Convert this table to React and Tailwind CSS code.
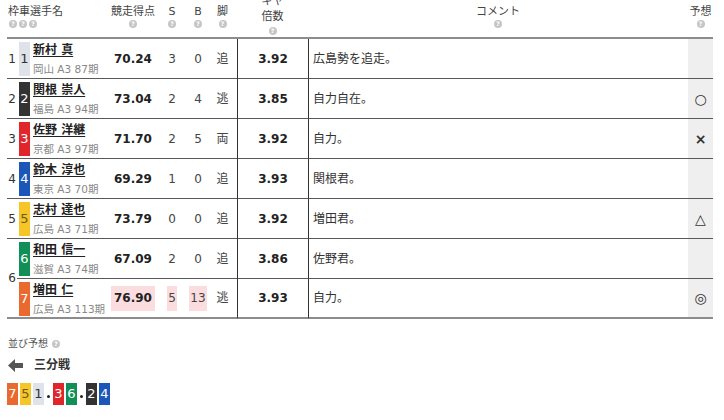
import React from 'react';

const rows = [
  { waku: 1, car: 1, name: '新村 真', info: '岡山 A3 87期', score: '70.24', s: 3, b: 0, kyaku: '追', gear: '3.92', comment: '広島勢を追走。', mark: '' },
  { waku: 2, car: 2, name: '関根 崇人', info: '福島 A3 94期', score: '73.04', s: 2, b: 4, kyaku: '逃', gear: '3.85', comment: '自力自在。', mark: '○' },
  { waku: 3, car: 3, name: '佐野 洋継', info: '京都 A3 97期', score: '71.70', s: 2, b: 5, kyaku: '両', gear: '3.92', comment: '自力。', mark: '×' },
  { waku: 4, car: 4, name: '鈴木 淳也', info: '東京 A3 70期', score: '69.29', s: 1, b: 0, kyaku: '追', gear: '3.93', comment: '関根君。', mark: '' },
  { waku: 5, car: 5, name: '志村 達也', info: '広島 A3 71期', score: '73.79', s: 0, b: 0, kyaku: '追', gear: '3.92', comment: '増田君。', mark: '△' },
  { waku: 6, car: 6, name: '和田 信一', info: '滋賀 A3 74期', score: '67.09', s: 2, b: 0, kyaku: '追', gear: '3.86', comment: '佐野君。', mark: '' },
  { waku: null, car: 7, name: '増田 仁', info: '広島 A3 113期', score: '76.90', s: 5, b: 13, kyaku: '逃', gear: '3.93', comment: '自力。', mark: '◎', top: true },
];

const carColors = {
  1: 'bg-[#dfe3e9] text-[#333]',
  2: 'bg-[#333333] text-white',
  3: 'bg-[#e0262b] text-white',
  4: 'bg-[#1b57b9] text-white',
  5: 'bg-[#f6c527] text-[#6b5a20]',
  6: 'bg-[#108f57] text-white',
  7: 'bg-[#e9692f] text-white',
};

const font = "font-['DejaVu_Sans','Noto_Sans_CJK_JP',sans-serif]";

const Q = () => (
  <span className="flex h-[8px] w-[8px] items-center justify-center rounded-full bg-[#c6c6c6] text-[6px] font-bold leading-none text-white">?</span>
);

const HeadCell = ({ label, className = '' }) => (
  <div className={`flex h-[39px] flex-col items-center border-b-2 border-[#8c8c8c] pt-[5px] ${className}`}>
    <span className="text-[11px] leading-[14px] text-[#444]">{label}</span>
    <span className="mt-[1px]"><Q /></span>
  </div>
);

const Hi = ({ on, children, className = '' }) => (
  <span className={`flex h-[25px] items-center ${on ? 'bg-[#fbdde0]' : ''} ${className}`}>{children}</span>
);

const LineBox = ({ n }) => (
  <span className={`flex h-[22px] w-[11px] items-center justify-center text-[13px] ${carColors[n]}`}>{n}</span>
);

export default function App() {
  return (
    <div className={`min-h-[420px] bg-white pl-[7px] text-[#333] ${font}`}>
      <div className="grid w-[706px] grid-cols-[10px_15px_78px_46px_32px_20px_29px_71px_380px_25px]">
        {/* header */}
        <div className="col-span-3 flex h-[39px] flex-col border-b-2 border-[#8c8c8c] pl-[1px] pt-[5px]">
          <span className="text-[11px] leading-[14px] text-[#444]">枠車選手名</span>
          <span className="mt-[1px] flex gap-[2px] pl-[1px]"><Q /><Q /><Q /></span>
        </div>
        <HeadCell label="競走得点" />
        <HeadCell label="S" />
        <HeadCell label="B" />
        <HeadCell label="脚" />
        <div className="flex h-[39px] flex-col items-center border-b-2 border-[#8c8c8c]">
          <div className="-mt-[6px] flex flex-col items-center text-[11px] leading-[15px] text-[#444]">
            <span>ギヤ</span>
            <span>倍数</span>
            <span className="mt-[3px]"><Q /></span>
          </div>
        </div>
        <HeadCell label="コメント" />
        <HeadCell label="予想" />

        {/* body */}
        {rows.map((r, i) => {
          const last = i === rows.length - 1;
          const line = last ? 'border-b-2 border-[#8c8c8c]' : 'border-b border-[#5a5a5a]';
          return (
            <React.Fragment key={r.car}>
              {r.waku !== null && (
                <div className={`flex items-center justify-center text-[12px] ${r.waku === 6 ? 'row-span-2 border-b-2 border-[#8c8c8c]' : `h-[40px] ${line}`}`}>
                  {r.waku}
                </div>
              )}
              <div className={`flex h-[40px] items-start pt-[3px] ${line}`}>
                <span className={`ml-[2px] flex h-[34px] w-[11px] items-center justify-center text-[13px] ${carColors[r.car]}`}>{r.car}</span>
              </div>
              <div className={`h-[40px] pl-[1px] pt-[3px] ${line}`}>
                <div className="whitespace-nowrap text-[12px] font-bold leading-[16px] text-[#222] underline underline-offset-2">{r.name}</div>
                <div className="mt-[4px] whitespace-nowrap text-[10.5px] leading-[14px] text-[#888]">{r.info}</div>
              </div>
              <div className={`flex h-[40px] items-center justify-center ${line}`}>
                <Hi on={r.top} className="px-[3px] text-[12px] font-bold text-[#222]">{r.score}</Hi>
              </div>
              <div className={`flex h-[40px] items-center justify-center text-[12px] text-[#444] ${line}`}>
                <Hi on={r.top} className="px-[1px]">{r.s}</Hi>
              </div>
              <div className={`flex h-[40px] items-center justify-center text-[12px] text-[#444] ${line}`}>
                <Hi on={r.top} className="px-[1px]">{r.b}</Hi>
              </div>
              <div className={`flex h-[40px] items-center justify-center text-[12px] text-[#444] ${line}`}>{r.kyaku}</div>
              <div className={`flex h-[40px] items-center justify-center border-l border-l-[#333] text-[12px] font-bold text-[#222] ${line}`}>{r.gear}</div>
              <div className={`flex h-[40px] items-center border-l border-l-[#333] pl-[4px] text-[12px] text-[#333] ${line}`}>{r.comment}</div>
              <div className={`flex h-[40px] items-center justify-center bg-[#efefef] text-[14px] font-bold leading-none text-[#333] ${line}`}>{r.mark}</div>
            </React.Fragment>
          );
        })}
      </div>

      {/* 並び予想 */}
      <div className="mt-[18px] flex items-center gap-[4px] pl-[1px]">
        <span className="text-[10px] leading-[14px] text-[#555]">並び予想</span>
        <Q />
      </div>
      <div className="mt-[6px] flex h-[16px] items-center">
        <svg width="16" height="13" viewBox="0 0 16 13" className="ml-[1px]">
          <path d="M0 6.5 L7 0 V4 H15 V9 H7 V13 Z" fill="#555" />
        </svg>
        <span className="ml-[10px] text-[12px] font-bold text-[#333]">三分戦</span>
      </div>
      <div className="mt-[10px] flex items-center">
        <div className="flex gap-[2px]">
          <LineBox n={7} />
          <LineBox n={5} />
          <LineBox n={1} />
        </div>
        <span className="mx-[3px] mt-[4px] h-[3px] w-[3px] rounded-full bg-[#222]"></span>
        <div className="flex gap-[2px]">
          <LineBox n={3} />
          <LineBox n={6} />
        </div>
        <span className="mx-[3px] mt-[4px] h-[3px] w-[3px] rounded-full bg-[#222]"></span>
        <div className="flex gap-[2px]">
          <LineBox n={2} />
          <LineBox n={4} />
        </div>
      </div>
    </div>
  );
}
